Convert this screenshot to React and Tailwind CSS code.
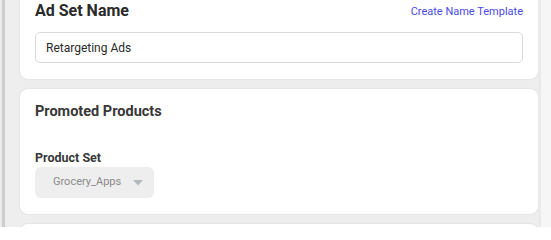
import React from "react";

export default function App() {
  return (
    <div
      className="flex h-[227px] w-[551px] overflow-hidden bg-[#f1f1f1]"
      style={{ fontFamily: "Roboto, 'Noto Sans', sans-serif" }}
    >
      <div className="w-[2px] shrink-0 bg-[#ededed]" />
      <div className="w-[3px] shrink-0 bg-[#cdcdcd]" />
      <div className="flex w-[533px] shrink-0 flex-col gap-[10px] bg-[#eeeeee] pl-[15px] -mt-[12px]">
        <div className="rounded-[8px] bg-white px-[15px] pt-[12px] pb-[16px] shadow-[0_0_2px_rgba(0,0,0,0.12)]">
          <div className="flex h-[22px] items-center justify-between">
            <span className="text-[16px] font-bold leading-none text-[#2a2a2a]">Ad Set Name</span>
            <span className="text-[11px] leading-none text-[#4a4ae6]">Create Name Template</span>
          </div>
          <div className="mt-[10px] flex h-[31px] items-center rounded-[5px] border border-[#dadada] px-[10px] text-[12px] text-[#2a2a2a]">
            Retargeting Ads
          </div>
        </div>
        <div className="rounded-[8px] bg-white px-[15px] pt-[13px] pb-[16px] shadow-[0_0_2px_rgba(0,0,0,0.12)]">
          <div className="flex h-[20px] items-center text-[14.5px] font-bold leading-none text-[#383838]">
            Promoted Products
          </div>
          <div className="mt-[28px] flex h-[16px] items-center text-[12.5px] font-bold leading-none text-[#383838]">
            Product Set
          </div>
          <div className="mt-[1px] flex h-[31px] w-[119px] items-center justify-between rounded-[6px] bg-[#eeeeee] pl-[18px] pr-[11px] text-[11px] text-[#8a8a8a]">
            <span>Grocery_Apps</span>
            <svg width="10" height="6" viewBox="0 0 10 6">
              <path d="M0 0 L10 0 L5 5.5 Z" fill="#b3b7be" />
            </svg>
          </div>
        </div>
        <div className="h-[30px] shrink-0 rounded-[8px] bg-white shadow-[0_0_2px_rgba(0,0,0,0.12)]" />
      </div>
      <div className="w-[3px] shrink-0 bg-[#eaeaea]" />
      <div className="flex-1 bg-[#f6f6f6]" />
    </div>
  );
}
